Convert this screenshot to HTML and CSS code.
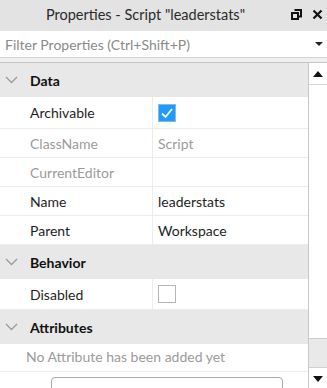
FILE: index.html
```html
<!DOCTYPE html>
<html lang="en">
<head>
  <meta charset="UTF-8" />
  <meta name="viewport" content="width=device-width, initial-scale=1.0" />
  <title>Properties</title>
  <link rel="stylesheet" href="styles.css">
</head>
<body>

  <div class="titlebar">
    <div class="title">Properties - Script "leaderstats"</div>
    <div class="title-icons">
      <svg width="11" height="11" viewBox="0 0 11 11">
        <path d="M3.5 1h6.5v6.5h-2" fill="none" stroke="#111" stroke-width="2"/>
        <rect x="1" y="4" width="6" height="6" fill="none" stroke="#111" stroke-width="2"/>
      </svg>
      <svg width="11" height="11" viewBox="0 0 11 11">
        <path d="M1.5 1.5l8 8M9.5 1.5l-8 8" stroke="#111" stroke-width="2.2"/>
      </svg>
    </div>
  </div>

  <div class="filter">
    <span class="filter-text">Filter Properties (Ctrl+Shift+P)</span>
    <span class="drop"></span>
  </div>

  <div class="gap"></div>

  <div class="panel">
    <div class="grid">
      <div class="section">
        <svg class="chev" width="13" height="8" viewBox="0 0 13 8"><path d="M1 1l5.5 5.5L12 1" fill="none" stroke="#9a9a9a" stroke-width="1.3"/></svg>
        <span>Data</span>
      </div>
      <div class="row tall">
        <div class="name">Archivable</div>
        <div class="value"><span class="check on"><svg width="14" height="12" viewBox="0 0 14 12"><path d="M2 6.5l3.5 3.5L12 2" fill="none" stroke="#fff" stroke-width="1.8"/></svg></span></div>
      </div>
      <div class="row">
        <div class="name muted">ClassName</div>
        <div class="value muted">Script</div>
      </div>
      <div class="row">
        <div class="name muted">CurrentEditor</div>
        <div class="value"></div>
      </div>
      <div class="row">
        <div class="name">Name</div>
        <div class="value">leaderstats</div>
      </div>
      <div class="row">
        <div class="name">Parent</div>
        <div class="value">Workspace</div>
      </div>

      <div class="section">
        <svg class="chev" width="13" height="8" viewBox="0 0 13 8"><path d="M1 1l5.5 5.5L12 1" fill="none" stroke="#9a9a9a" stroke-width="1.3"/></svg>
        <span>Behavior</span>
      </div>
      <div class="row mid">
        <div class="name">Disabled</div>
        <div class="value"><span class="check"></span></div>
      </div>

      <div class="section">
        <svg class="chev" width="13" height="8" viewBox="0 0 13 8"><path d="M1 1l5.5 5.5L12 1" fill="none" stroke="#9a9a9a" stroke-width="1.3"/></svg>
        <span>Attributes</span>
      </div>
      <div class="empty">No Attribute has been added yet</div>
      <div class="add-wrap"><div class="add-btn"></div></div>
    </div>

    <div class="scrollbar">
      <div class="arrow-box"><span class="up"></span></div>
      <div class="track"></div>
      <div class="thumb"></div>
      <div class="arrow-box bottom"><span class="down"></span></div>
    </div>
  </div>

</body>
</html>
```

FILE: styles.css
```css
body {
  margin: 0;
  width: 327px;
  height: 388px;
  overflow: hidden;
  font-family: Lato, "Open Sans", sans-serif;
  font-size: 14px;
  color: #1e1e1e;
  background-color: #f0f0f0;
}

.titlebar {
  height: 31px;
  display: flex;
  align-items: center;
  background-color: #e3e3e3;
}

.title {
  flex: 1;
  text-align: center;
  font-size: 14.5px;
  color: #2a2a2a;
  padding-bottom: 2px;
}

.title-icons {
  display: flex;
  align-items: center;
  gap: 10px;
  padding-right: 4px;
  padding-bottom: 2px;
}

.filter {
  height: 26px;
  display: flex;
  align-items: center;
  justify-content: space-between;
  padding: 0 4px 0 5px;
  background-color: white;
  border-bottom: 1px solid #d2d2d2;
}

.filter-text {
  color: #8a8a8a;
  font-size: 14px;
}

.drop {
  width: 0;
  height: 0;
  border-left: 4px solid transparent;
  border-right: 4px solid transparent;
  border-top: 4px solid #222;
}

.gap {
  height: 4px;
}

.panel {
  display: flex;
  height: 326px;
  border-top: 1px solid #c4c4c4;
  background-color: white;
}

.grid {
  flex: 1;
  overflow: hidden;
}

.section {
  height: 34px;
  display: flex;
  align-items: center;
  background-color: #e8e8e8;
  font-weight: bold;
  color: #111;
}

.chev {
  margin: 0 12px 0 5px;
}

.row {
  height: 28px;
  display: grid;
  grid-template-columns: 153px 1fr;
  border-bottom: 1px solid #ececec;
}

.row.tall {
  height: 31px;
}

.row.mid {
  height: 30px;
}

.name {
  display: flex;
  align-items: center;
  padding-left: 30px;
  border-right: 1px solid #ececec;
}

.value {
  display: flex;
  align-items: center;
  padding-left: 5px;
}

.muted {
  color: #9b9b9b;
}

.check {
  width: 16px;
  height: 16px;
  border: 1px solid #b5b5b5;
  background-color: white;
  display: flex;
  align-items: center;
  justify-content: center;
}

.check.on {
  background-color: #1e9bff;
  border-color: #8fb8d8;
}

.empty {
  height: 28px;
  display: flex;
  align-items: center;
  padding-left: 26px;
  padding-bottom: 2px;
  box-sizing: border-box;
  color: #9b9b9b;
  border-bottom: 1px solid #ececec;
}

.add-wrap {
  padding: 5px 0 0 51px;
}

.add-btn {
  width: 230px;
  height: 30px;
  border: 1px solid #a8a8a8;
  border-radius: 4px;
}

.scrollbar {
  width: 18px;
  border-left: 1px solid #c8c8c8;
  display: flex;
  flex-direction: column;
  background-color: white;
}

.arrow-box {
  height: 21px;
  display: flex;
  align-items: center;
  justify-content: center;
  border-bottom: 1px solid #d6d6d6;
}

.arrow-box.bottom {
  border-bottom: none;
  border-top: 1px solid #d0d0d0;
}

.track {
  flex: 1;
}

.thumb {
  height: 28px;
  background-color: #e9e9e9;
  border-top: 1px solid #cdcdcd;
}

.up {
  width: 0;
  height: 0;
  border-left: 5px solid transparent;
  border-right: 5px solid transparent;
  border-bottom: 6px solid #111;
}

.down {
  width: 0;
  height: 0;
  border-left: 5px solid transparent;
  border-right: 5px solid transparent;
  border-top: 6px solid #111;
}
```
